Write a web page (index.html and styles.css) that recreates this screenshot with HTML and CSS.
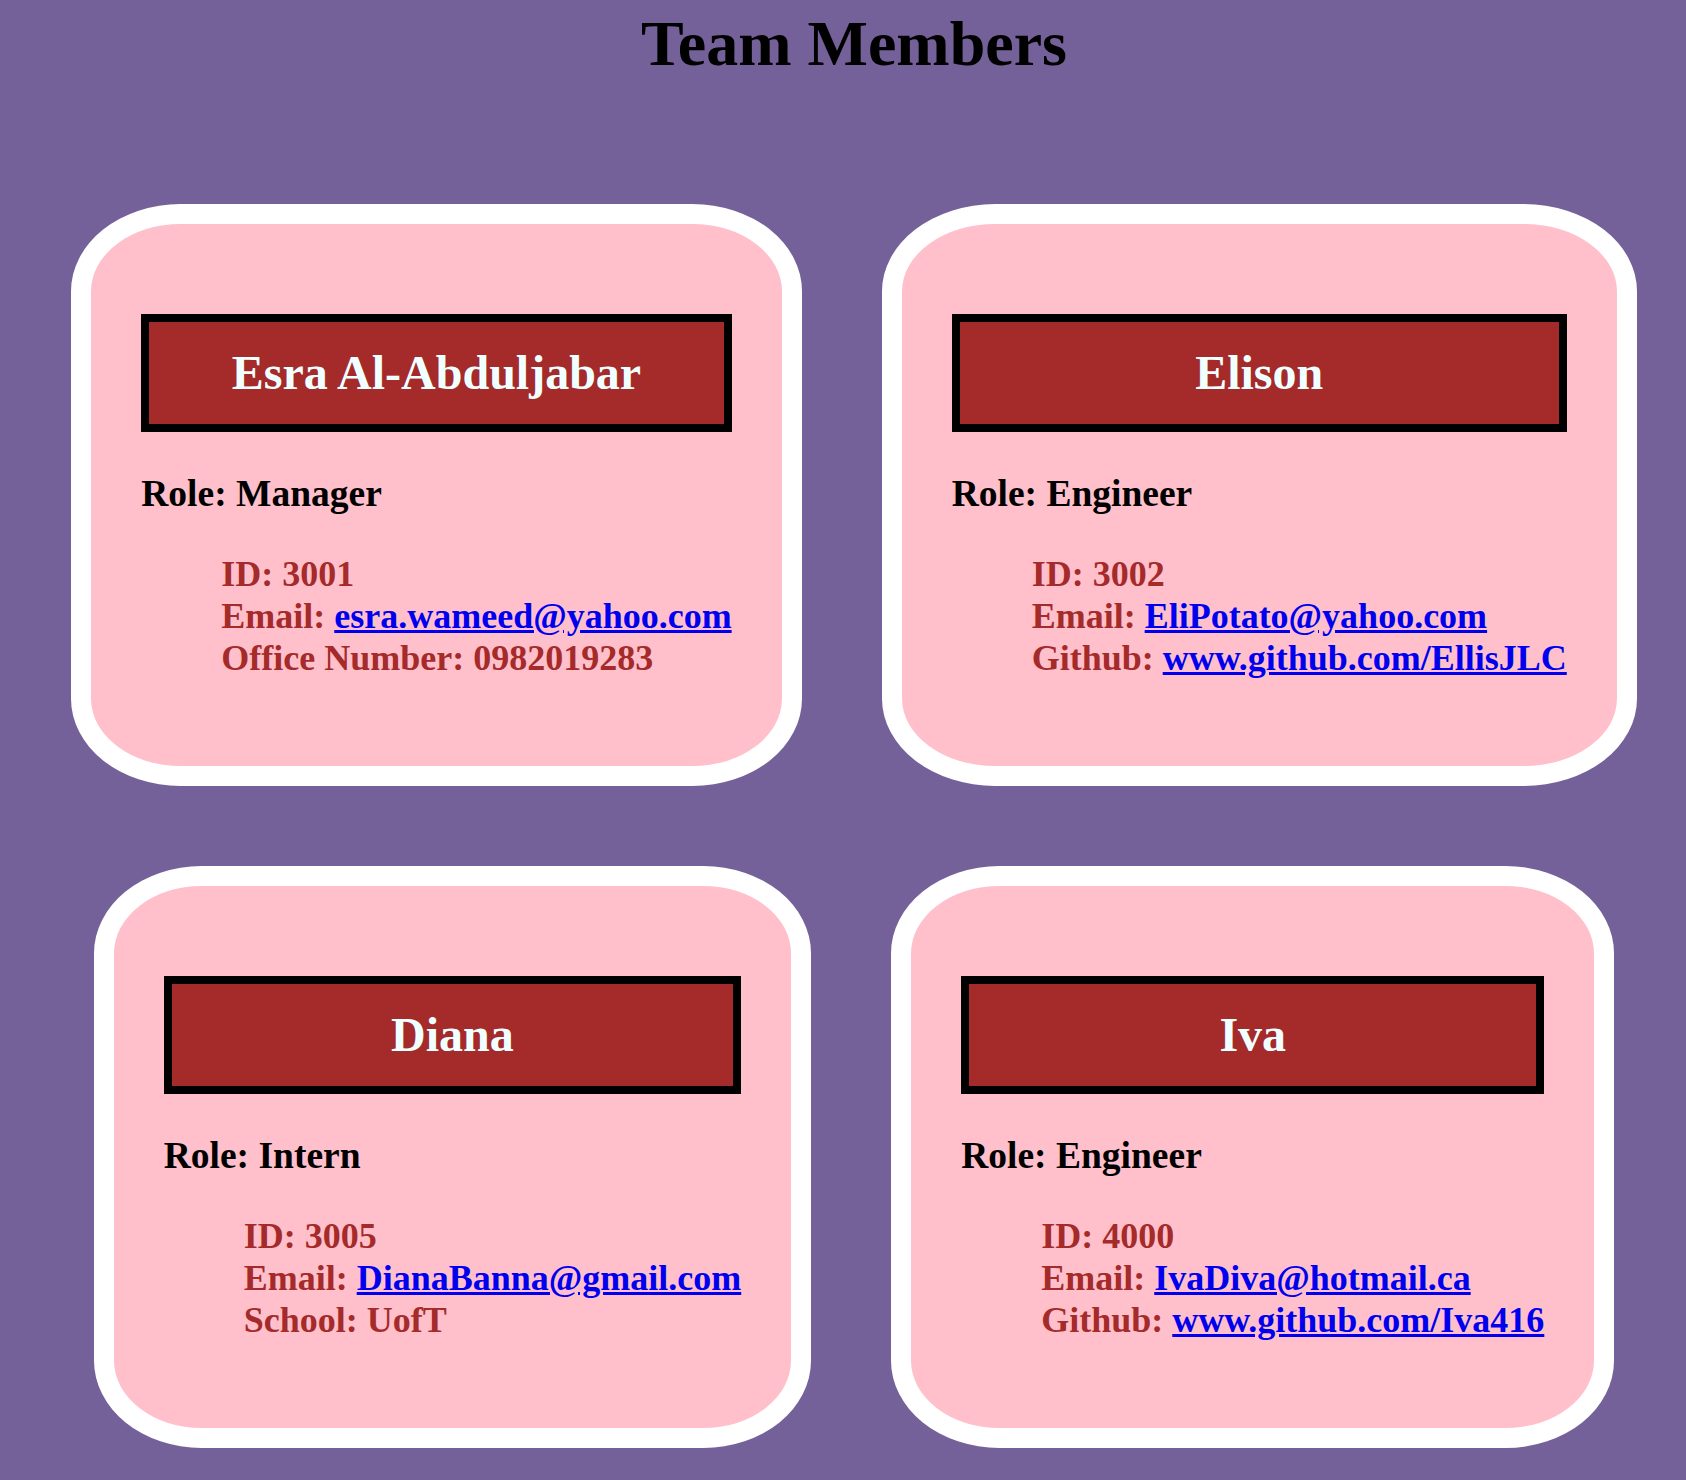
FILE: index.html
```html
<!DOCTYPE html>
<html lang="en">
<head>
<meta charset="UTF-8">
<title>Team Members</title>
<link rel="stylesheet" href="styles.css">
</head>
<body>
<h1 class="page-title">Team Members</h1>
<main class="team">
  <section class="card">
    <h2 class="card-name">Esra Al-Abduljabar</h2>
    <p class="card-role">Role: Manager</p>
    <div class="card-details">
      <div>ID: 3001</div>
      <div>Email: <a href="mailto:esra.wameed@yahoo.com">esra.wameed@yahoo.com</a></div>
      <div>Office Number: 0982019283</div>
    </div>
  </section>
  <section class="card">
    <h2 class="card-name">Elison</h2>
    <p class="card-role">Role: Engineer</p>
    <div class="card-details">
      <div>ID: 3002</div>
      <div>Email: <a href="mailto:EliPotato@yahoo.com">EliPotato@yahoo.com</a></div>
      <div>Github: <a href="#">www.github.com/EllisJLC</a></div>
    </div>
  </section>
  <section class="card">
    <h2 class="card-name">Diana</h2>
    <p class="card-role">Role: Intern</p>
    <div class="card-details">
      <div>ID: 3005</div>
      <div>Email: <a href="mailto:DianaBanna@gmail.com">DianaBanna@gmail.com</a></div>
      <div>School: UofT</div>
    </div>
  </section>
  <section class="card">
    <h2 class="card-name">Iva</h2>
    <p class="card-role">Role: Engineer</p>
    <div class="card-details">
      <div>ID: 4000</div>
      <div>Email: <a href="mailto:IvaDiva@hotmail.ca">IvaDiva@hotmail.ca</a></div>
      <div>Github: <a href="#">www.github.com/Iva416</a></div>
    </div>
  </section>
</main>
</body>
</html>
```
FILE: styles.css
```css
html, body {
  margin: 0;
  padding: 0;
}

body {
  background-color: #75619a;
  font-family: "Liberation Serif", "Times New Roman", serif;
  font-weight: bold;
  padding-left: 22px;
}

.page-title {
  margin: 7px 0 83px;
  font-size: 64px;
  line-height: 74px;
  text-align: center;
  color: #000;
}

.team {
  display: flex;
  flex-wrap: wrap;
  justify-content: center;
  align-items: flex-start;
}

.card {
  background-color: pink;
  border: 20px solid #fff;
  border-radius: 15%;
  padding: 50px;
  margin: 40px;
}

.card-name {
  margin: 40px 0;
  padding: 23px 0 24px;
  background-color: #a52a2a;
  border: 8px solid #000;
  color: azure;
  font-size: 48px;
  text-align: center;
}

.card-role {
  margin: 0 0 38px;
  font-size: 37.5px;
  color: #000;
}

.card-details {
  margin: 0 0 37px;
  padding-left: 80px;
  font-size: 36px;
  color: #a52a2a;
}

.card-details a {
  color: #0000ee;
  text-decoration: underline;
}
```
